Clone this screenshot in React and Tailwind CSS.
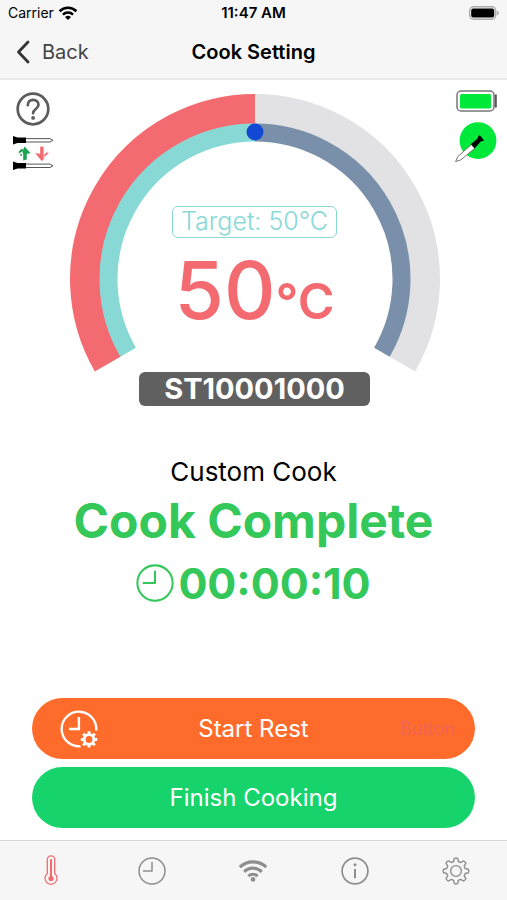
import React, { useState } from 'react';
import clsx from 'clsx';

const WifiBars = ({ className }) => (
    <svg viewBox="0 0 30 23" className={className} fill="none" stroke="currentColor" aria-hidden="true">
        <path d="M1.8 8.2a19 19 0 0 1 26.4 0" strokeWidth="3.2" />
        <path d="M6.2 12.8a12.6 12.6 0 0 1 17.6 0" strokeWidth="3.2" />
        <path d="M10.4 17.1a6.6 6.6 0 0 1 9.2 0" strokeWidth="3.2" />
        <circle cx="15" cy="20.4" r="2.3" fill="currentColor" stroke="none" />
    </svg>
);

const StatusWifi = () => (
    <svg viewBox="0 0 20 14" className="w-5 h-[14px]" aria-hidden="true">
        <path d="M1.6 5.2a12 12 0 0 1 16.8 0" fill="none" stroke="#000" strokeWidth="2.7" />
        <path d="M4.9 8.6a7.4 7.4 0 0 1 10.2 0" fill="none" stroke="#000" strokeWidth="2.4" />
        <path d="M7 11.1a4.4 4.4 0 0 1 6 0L10 14z" />
    </svg>
);

const StatusBattery = () => (
    <svg viewBox="0 0 30 14" className="w-[30px] h-[14px]" aria-hidden="true">
        <rect x=".7" y=".7" width="26" height="12.6" rx="4" fill="none" stroke="#aaa" strokeWidth="1.4" />
        <rect x="2.2" y="2.4" width="23" height="9.2" rx="2" />
        <path d="M28 4.8c2.4 1 2.4 3.4 0 4.4z" fill="#aaa" />
    </svg>
);

const HelpIcon = () => (
    <svg viewBox="0 0 34 34" className="w-[34px] h-[34px]" fill="none" stroke="#5c5c5c" aria-hidden="true">
        <circle cx="17" cy="17" r="15.3" strokeWidth="2.7" />
        <path d="M11.8 13.2c0-3.2 2.2-5.4 5.3-5.4 3.2 0 5.4 2.1 5.4 4.9 0 4.3-5.4 4.2-5.4 8.5" strokeWidth="2.7" strokeLinecap="round" />
        <circle cx="17.1" cy="25.9" r="1.9" fill="#5c5c5c" stroke="none" />
    </svg>
);

const ProbesIcon = () => (
    <svg viewBox="0 0 42 34" className="w-[42px] h-[34px]" aria-hidden="true">
        {[0, 25.5].map((y) => (
            <g key={y} transform={`translate(0 ${y})`}>
                <path d="M13 2.600h25l3 1.700-3 1.700H13z" fill="#fff" stroke="#444" strokeWidth=".9" />
                <path d="M1 0l4.500 1.500h8.500v5.600H5.500L1 8.600z" />
            </g>
        ))}
        <g fill="#1aa352">
            <path d="M12.500 10.500l6.200 6.800-3.900.5v5.600l-3.600 1.100v-7l-1-1.500z" />
            <path d="M9.800 12.500l1.600 2-4.700 3.200.3-2.400zM7.300 19l2.400-1.500.3 2.500z" />
        </g>
        <g fill="#f36b70">
            <path d="M28.200 10.500l3.400.3v13l-1.900 1.300-6.500-8 5 1z" />
            <path d="M32 21.500l4.800-4.800-2.500-.2-1.600 1.800z" />
        </g>
    </svg>
);

const ProbeBattery = () => (
    <svg viewBox="0 0 41 22" className="w-[41px] h-[22px]" aria-hidden="true">
        <rect x="1" y="1" width="37" height="20" rx="4" fill="#fff" stroke="#777" strokeWidth="1.5" />
        <rect x="4" y="4" width="31" height="14.5" rx="1.5" fill="#00e83a" />
        <path d="M38.800 4.500h2v13h-2z" fill="#555" />
    </svg>
);

const ProbeStatus = () => (
    <svg viewBox="0 0 42 42" className="w-[42px] h-[42px]" aria-hidden="true">
        <circle cx="23" cy="18.6" r="18.4" fill="#00e83a" />
        <path d="M16.500 22.500L2.800 34.500.6 39.600l5.200-1.700 14.200-11.800z" fill="#fff" stroke="#777" strokeWidth="1" />
        <path d="M15.800 22.300l6.200-5.300 2-3.800 1.500.8 3.600 4.600-3.400 1-6.200 6.800z" />
    </svg>
);

const ClockIcon = ({ className, stroke = 1.5 }) => (
    <svg viewBox="0 0 28 28" className={className} fill="none" stroke="currentColor" strokeWidth={stroke} aria-hidden="true">
        <circle cx="14" cy="14" r="13" />
        <path d="M14 5.6V14H5.500" strokeLinecap="round" strokeLinejoin="round" />
    </svg>
);

const RestTimerIcon = () => (
    <svg viewBox="0 0 38 38" className="w-[38px] h-[38px]" fill="none" stroke="#fff" strokeWidth="2.4" aria-hidden="true">
        <path d="M36.200 20.500A17.300 17.300 0 1 0 20.500 36.200" />
        <path d="M18.900 7v12H9" />
        <circle cx="29" cy="29.5" r="4.8" strokeWidth="2.8" />
        <path d="M29 21.300v3M29 34.600v3M20.800 29.500h3M34.200 29.500h3M23.200 23.700l2.200 2.200M32.600 33.100l2.200 2.200M34.800 23.700l-2.200 2.200M25.400 33.100l-2.200 2.200" strokeWidth="3" />
    </svg>
);

const ThermometerIcon = ({ className }) => (
    <svg viewBox="0 0 14 31" className={className} fill="none" stroke="currentColor" aria-hidden="true">
        <path d="M3.300 18.600V4.600a3.700 3.700 0 0 1 7.400 0v14a6 6 0 1 1-7.400 0z" strokeWidth="1.3" />
        <path d="M7 5v18" strokeWidth="2" strokeLinecap="round" />
        <circle cx="7" cy="23.6" r="2.6" fill="currentColor" stroke="none" />
    </svg>
);

const InfoIcon = ({ className }) => (
    <svg viewBox="0 0 28 28" className={className} fill="none" stroke="currentColor" strokeWidth="1.7" aria-hidden="true">
        <circle cx="14" cy="14" r="12.9" />
        <path d="M14 12v9.200" strokeWidth="2" />
        <circle cx="14" cy="7.7" r="1.5" fill="currentColor" stroke="none" />
    </svg>
);

const GearIcon = ({ className }) => (
    <svg viewBox="0 0 28 28" className={className} fill="none" stroke="currentColor" strokeWidth="1.4" strokeLinejoin="round" aria-hidden="true">
        <path d="M12.300 1.500q1.700-1 3.400 0l.7 3 2.300 1 2.700-1.600q1.900.5 2.400 2.400l-1.600 2.900 1 2.300 3.100.8q1 1.700 0 3.400l-3.100.8-1 2.300 1.600 2.800q-.5 1.900-2.400 2.400l-2.800-1.600-2.300 1-.6 3.100q-1.700 1-3.400 0l-.7-3.100-2.300-1-2.800 1.600q-1.900-.5-2.400-2.400l1.600-2.800-1-2.300-3.100-.8q-1-1.700 0-3.400l3.100-.8 1-2.300-1.600-2.900q.5-1.900 2.400-2.400l2.800 1.600 2.300-1z" />
        <circle cx="14" cy="14" r="5.4" />
    </svg>
);

const Gauge = () => (
    <svg viewBox="0 0 370 278" className="w-full [grid-area:1/1]" fill="none" aria-hidden="true">
        {/* measured temperature */}
        <path d="M37.800 270A170 170 0 0 1 185 15" stroke="#f36b70" strokeWidth="30" />
        <path d="M185 15A170 170 0 0 1 332.200 270" stroke="#e2e2e4" strokeWidth="30" />
        {/* target temperature */}
        <path d="M58.100 258.200A146.500 146.500 0 0 1 185 38.500" stroke="#88d9d6" strokeWidth="18" />
        <path d="M185 38.500A146.500 146.500 0 0 1 311.900 258.200" stroke="#7a90aa" strokeWidth="18" />
        <circle cx="185" cy="38" r="8.5" fill="#1249d4" />
    </svg>
);

const tabs = [
    { id: 'cook', label: 'Cook', icon: ThermometerIcon, size: 'w-[14px] h-[31px]' },
    { id: 'timer', label: 'Timer', icon: ClockIcon, size: 'w-7 h-7' },
    { id: 'wifi', label: 'Wi-Fi', icon: WifiBars, size: 'w-[30px] h-[23px]' },
    { id: 'info', label: 'Info', icon: InfoIcon, size: 'w-7 h-7' },
    { id: 'settings', label: 'Settings', icon: GearIcon, size: 'w-7 h-7' }
];

const App = () => {
    const [activeTab, setActiveTab] = useState('cook');

    return (
        <div className="min-h-screen flex flex-col bg-white text-black font-['Inter',sans-serif]">
            <header className="bg-[#f6f6f6] border-b-2 border-[#e9e9e9]">
                <div className="grid grid-cols-3 items-center h-[26px] px-2 text-sm">
                    <div className="flex items-center gap-1">
                        <span>Carrier</span>
                        <StatusWifi />
                    </div>
                    <span className="text-center text-[15px] font-semibold whitespace-nowrap">11:47 AM</span>
                    <div className="flex justify-end">
                        <StatusBattery />
                    </div>
                </div>
                <div className="grid grid-cols-3 items-center h-[52px] px-4">
                    <button type="button" className="flex items-center gap-3 text-xl text-[#444]">
                        <svg viewBox="0 0 14 24" className="w-[14px] h-6" fill="none" stroke="#333" strokeWidth="2.8" strokeLinecap="round" strokeLinejoin="round" aria-hidden="true">
                            <path d="M12 2L2.500 12 12 22" />
                        </svg>
                        Back
                    </button>
                    <h1 className="text-center text-xl font-semibold whitespace-nowrap">Cook Setting</h1>
                </div>
            </header>

            <main className="flex-1 flex flex-col">
                <div className="flex justify-between pl-3 pr-[10px]">
                    <div className="flex flex-col items-center w-[42px] gap-[10px] pt-3">
                        <button type="button" aria-label="Help"><HelpIcon /></button>
                        <button type="button" aria-label="Swap probes"><ProbesIcon /></button>
                    </div>

                    <div className="flex-1 max-w-[370px] flex flex-col items-center pt-[14px]">
                        <div className="grid w-full">
                            <Gauge />
                            <div className="[grid-area:1/1] flex flex-col items-center pt-[112px]">
                                <span className="flex items-center h-8 px-2 border border-[#88d9d6] rounded-md text-[25px] font-light text-[#88d9d6]">
                                    Target: 50°C
                                </span>
                                <p className="flex items-baseline mt-3 text-[80px] leading-[80px] font-medium text-[#f36b70]">
                                    50<span className="text-[50px] font-semibold">°C</span>
                                </p>
                            </div>
                        </div>
                        <div className="w-[231px] h-[34px] flex items-center justify-center rounded-md bg-[#606060] text-[29px] font-bold text-white">
                            ST10001000
                        </div>
                    </div>

                    <div className="flex flex-col items-center w-[42px] gap-[10px] pt-[10px]">
                        <ProbeBattery />
                        <ProbeStatus />
                    </div>
                </div>

                <section className="flex flex-col items-center mt-12 whitespace-nowrap">
                    <h2 className="text-[26px] leading-9">Custom Cook</h2>
                    <p className="text-5xl leading-[62px] font-bold text-[#34c759]">Cook Complete</p>
                    <p className="flex items-center gap-1 text-[43px] leading-[62px] font-bold text-[#34c759]">
                        <ClockIcon className="w-[38px] h-[38px]" />
                        00:00:10
                    </p>
                </section>

                <div className="flex flex-col gap-2 mt-auto px-8 pb-3 text-2xl text-white">
                    <button type="button" className="grid grid-cols-3 items-center h-[61px] px-5 rounded-full bg-[#ff6b2b]">
                        <span className="pl-2"><RestTimerIcon /></span>
                        <span className="whitespace-nowrap">Start Rest</span>
                        <span className="text-right text-lg leading-6 text-[#ee6655]">Button</span>
                    </button>
                    <button type="button" className="h-[61px] rounded-full bg-[#16d46b]">Finish Cooking</button>
                </div>
            </main>

            <nav className="grid grid-cols-5 h-[60px] bg-[#f6f6f6] border-t border-[#d8d8d8]">
                {tabs.map(({ id, label, icon: Icon, size }) => (
                    <button
                        key={id}
                        type="button"
                        aria-label={label}
                        onClick={() => setActiveTab(id)}
                        className={clsx(
                            'flex items-center justify-center',
                            activeTab === id ? 'text-[#f36b70]' : 'text-[#8e8e8e]'
                        )}
                    >
                        <Icon className={size} />
                    </button>
                ))}
            </nav>
        </div>
    );
};

export default App;
